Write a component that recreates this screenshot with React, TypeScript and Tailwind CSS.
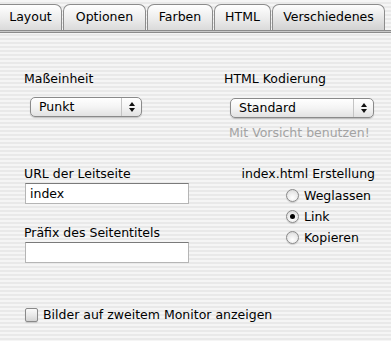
import React from 'react';

const font = "font-['DejaVu_Sans','Liberation_Sans',sans-serif]";

type TabProps = { label: string; width: string; selected?: boolean };

function Tab({ label, width, selected }: TabProps) {
  return (
    <div
      className={`${width} flex h-[26px] items-center justify-center rounded-t-[7px] border border-b-0 border-[#8c8c8c] text-[12.5px] text-black ${
        selected
          ? 'bg-[linear-gradient(to_bottom,#fdfdfd,#e4e4e4_55%,#d2d2d2)]'
          : 'bg-[linear-gradient(to_bottom,#ffffff,#ececec_55%,#dadada)]'
      }`}
    >
      {label}
    </div>
  );
}

function Select({ value, width, divider }: { value: string; width: string; divider: string }) {
  return (
    <div
      className={`${width} flex h-[20px] items-stretch rounded-[5px] border border-[#8a8a8a] bg-[linear-gradient(to_bottom,#ffffff,#f4f4f4_50%,#e2e2e2)] shadow-[0_1px_1px_rgba(0,0,0,0.2)]`}
    >
      <div className={`${divider} flex items-center pl-[8px] text-[12.5px] text-black`}>{value}</div>
      <div className="flex flex-1 flex-col items-center justify-center gap-[2px] border-l border-[#c4c4c4]">
        <svg width="6" height="4" viewBox="0 0 6 4">
          <path d="M0 4 L3 0 L6 4 Z" fill="#111" />
        </svg>
        <svg width="6" height="4" viewBox="0 0 6 4">
          <path d="M0 0 L6 0 L3 4 Z" fill="#111" />
        </svg>
      </div>
    </div>
  );
}

function TextInput({ value }: { value?: string }) {
  return (
    <div className="flex h-[21px] w-[164px] items-center border border-[#b5b5b5] border-t-[#7a7a7a] bg-white pl-[4px] text-[12.5px] text-black">
      {value}
    </div>
  );
}

function Radio({ label, checked }: { label: string; checked?: boolean }) {
  return (
    <div className="flex h-[21px] items-center gap-[5px] text-[12.5px] text-black">
      <div className="flex h-[13px] w-[13px] items-center justify-center rounded-full border border-[#8a8a8a] bg-[radial-gradient(circle_at_50%_70%,#ffffff,#e8e8e8_60%,#c8c8c8)] shadow-[0_1px_1px_rgba(0,0,0,0.15)]">
        {checked && <div className="h-[5px] w-[5px] rounded-full bg-black" />}
      </div>
      <span>{label}</span>
    </div>
  );
}

export default function App() {
  return (
    <div
      className={`${font} h-[341px] w-[391px] overflow-hidden bg-[image:repeating-linear-gradient(to_bottom,#f5f5f5_0px,#f5f5f5_2px,#e9e9e9_2px,#e9e9e9_4px)]`}
    >
      <div className="flex items-end pt-[4px]">
        <Tab label="Layout" width="w-[62px] rounded-tl-none border-l-0" />
        <div className="w-[1px]" />
        <Tab label="Optionen" width="w-[83px]" />
        <div className="w-[1px]" />
        <Tab label="Farben" width="w-[66px]" />
        <div className="w-[1px]" />
        <Tab label="HTML" width="w-[57px]" />
        <div className="w-[1px]" />
        <Tab label="Verschiedenes" width="w-[113px]" selected />
      </div>
      <div className="h-[3px] border-t border-b border-[#8c8c8c] bg-[#c9c9c9]" />

      <div className="grid grid-cols-[200px_1fr] pt-[38px] text-[12.5px] leading-[16px] text-black">
        <div className="flex flex-col pl-[24px]">
          <div>Maßeinheit</div>
          <div className="mt-[10px] pl-[6px]">
            <Select value="Punkt" width="w-[112px]" divider="w-[90px]" />
          </div>
          <div className="mt-[49px]">URL der Leitseite</div>
          <div className="mt-[1px] pl-[1px]">
            <TextInput value="index" />
          </div>
          <div className="mt-[21px]">Präfix des Seitentitels</div>
          <div className="mt-[1px] pl-[1px]">
            <TextInput />
          </div>
        </div>

        <div className="flex flex-col pl-[24px]">
          <div>HTML Kodierung</div>
          <div className="mt-[11px] pl-[6px]">
            <Select value="Standard" width="w-[144px]" divider="w-[122px]" />
          </div>
          <div className="mt-[7px] pl-[5px] text-[#a3a3a3]">Mit Vorsicht benutzen!</div>
          <div className="mt-[25px] pr-[16px] text-right">index.html Erstellung</div>
          <div className="mt-[3px] flex flex-col pl-[62px]">
            <Radio label="Weglassen" />
            <Radio label="Link" checked />
            <Radio label="Kopieren" />
          </div>
        </div>
      </div>

      <div className="mt-[43px] flex items-center gap-[5px] pl-[25px] text-[12.5px] text-black">
        <div className="h-[14px] w-[13px] rounded-[2px] border border-[#8a8a8a] bg-[linear-gradient(to_bottom,#fafafa,#e6e6e6_60%,#d4d4d4)] shadow-[0_1px_1px_rgba(0,0,0,0.15)]" />
        <span>Bilder auf zweitem Monitor anzeigen</span>
      </div>
    </div>
  );
}
